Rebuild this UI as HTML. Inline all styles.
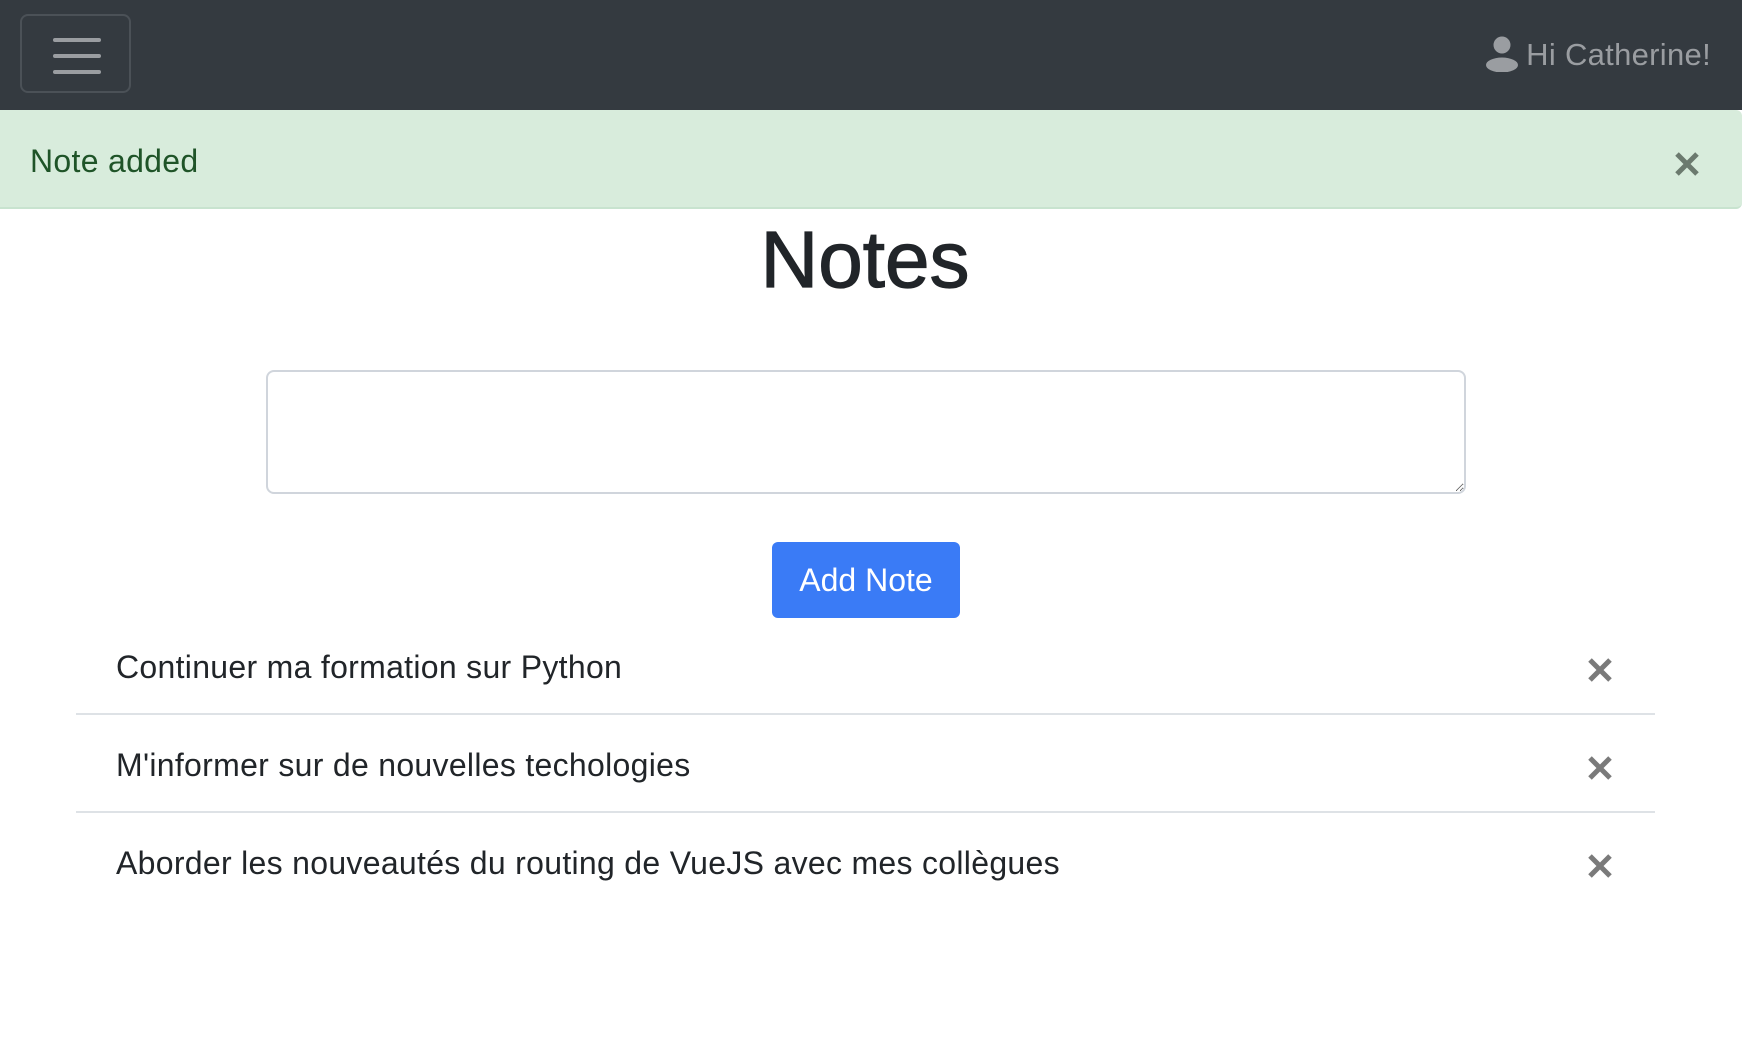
<!DOCTYPE html>
<html><head><meta charset="utf-8"><style>
*{box-sizing:border-box;margin:0;padding:0}
body{width:1742px;height:1040px;background:#fff;font-family:"Liberation Sans",sans-serif;color:#212529;position:relative;overflow:hidden}
.nav{position:absolute;left:0;top:0;width:1742px;height:110px;background:#343a40}
.burger{position:absolute;left:20px;top:14px;width:111px;height:79px;border:2px solid #4b5157;border-radius:8px}
.burger i{position:absolute;left:31px;width:48px;height:4px;border-radius:2px;background:#9a9da1}
.user{position:absolute;right:31px;top:35px;font-size:31px;color:#9a9da1;line-height:40px;white-space:nowrap;letter-spacing:0.3px}
.user svg{vertical-align:top;margin-right:8px;margin-top:1px}
.alert{position:absolute;left:0;top:110px;width:1742px;height:99px;background:#d8ecdc;border-bottom:2px solid #c8e3cf;border-radius:0 6px 6px 0}
.alert span{position:absolute;left:30px;top:33px;font-size:32px;color:#1f5428;line-height:36px;letter-spacing:0.3px}
h1{position:absolute;left:-6px;width:1742px;top:212px;text-align:center;font-size:80px;font-weight:normal;line-height:96px;-webkit-text-stroke:1.2px #212529}
textarea{position:absolute;left:266px;top:370px;width:1200px;height:124px;border:2px solid #d0d5dc;border-radius:8px;resize:vertical}
.btn{position:absolute;left:772px;top:542px;width:188px;height:76px;background:#3a7bf6;border-radius:6px;color:#fff;font-size:32px;text-align:center;line-height:76px}
.row{position:absolute;left:76px;width:1579px;height:98px}
.row span{position:absolute;left:40px;top:1px;font-size:32px;line-height:36px;white-space:nowrap;letter-spacing:0.3px}
.row svg{position:absolute;left:1511px}
.div{position:absolute;left:76px;width:1579px;height:2px;background:#dee2e6}
</style></head><body>
<div class="nav">
 <div class="burger"><i style="top:22px"></i><i style="top:38px"></i><i style="top:54px"></i></div>
 <div class="user"><svg width="32" height="36" viewBox="0 0 32 36"><circle cx="16" cy="9" r="8.5" fill="#9a9da1"/><ellipse cx="16" cy="29" rx="16" ry="7.5" fill="#9a9da1"/></svg>Hi Catherine!</div>
</div>
<div class="alert"><span>Note added</span>
 <svg style="position:absolute;left:1674px;top:41px" width="26" height="26" viewBox="0 0 26 26"><path d="M3 3L23 23M23 3L3 23" stroke="#6b7a6e" stroke-width="5"/></svg>
</div>
<h1>Notes</h1>
<textarea></textarea>
<div class="btn">Add Note</div>
<div class="row" style="top:648px"><span>Continuer ma formation sur Python</span><svg style="top:9px" width="26" height="26" viewBox="0 0 26 26"><path d="M3 3L23 23M23 3L3 23" stroke="#7a7a7a" stroke-width="5"/></svg></div>
<div class="div" style="top:713px"></div>
<div class="row" style="top:746px"><span>M'informer sur de nouvelles techologies</span><svg style="top:9px" width="26" height="26" viewBox="0 0 26 26"><path d="M3 3L23 23M23 3L3 23" stroke="#7a7a7a" stroke-width="5"/></svg></div>
<div class="div" style="top:811px"></div>
<div class="row" style="top:844px"><span>Aborder les nouveautés du routing de VueJS avec mes collègues</span><svg style="top:9px" width="26" height="26" viewBox="0 0 26 26"><path d="M3 3L23 23M23 3L3 23" stroke="#7a7a7a" stroke-width="5"/></svg></div>
</body></html>
